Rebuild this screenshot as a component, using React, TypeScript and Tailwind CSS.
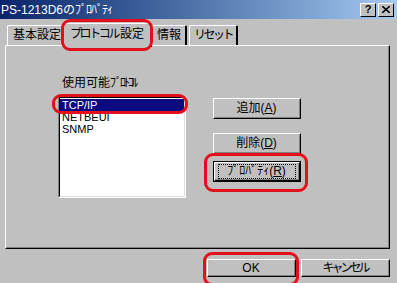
import React from "react"

const font = { fontFamily: '"Liberation Sans", "Noto Sans CJK JP", sans-serif' }

function Ring({ className }: { className: string }) {
    return <div className={`absolute border-[3px] border-[#e3101c] rounded-[9px] pointer-events-none ${className}`} />
}

function Btn({ label, under, def }: { label: React.ReactNode; under: string; def?: boolean }) {
    return (
        <div className={`w-[88px] h-[21px] bg-[#c0c0c0] ${def ? "border border-black" : ""}`}>
            <div className="w-full h-full border-t border-l border-t-white border-l-white border-r border-b border-r-black border-b-black">
                <div className="w-full h-full border-r border-b border-r-[#808080] border-b-[#808080] flex items-center justify-center">
                    <div className={`px-[2px] text-[12px] leading-[13px] text-black ${def ? "outline outline-1 outline-dotted outline-black w-[76px] text-center" : ""}`}>
                        {label}(<span className="underline">{under}</span>)
                    </div>
                </div>
            </div>
        </div>
    )
}

export default function App() {
    return (
        <div className="w-[397px] h-[283px] bg-[#c0c0c0] overflow-hidden relative" style={font}>
            {/* Title bar */}
            <div className="h-[19px] flex items-center justify-between bg-gradient-to-r from-[#0a246a] to-[#a6caf0] pl-[1px] pr-[3px]">
                <span className="text-white text-[12px] leading-[14px]">PS-1213D6の<span className="tracking-[-1px]">ﾌﾟﾛﾊﾟﾃｨ</span></span>
                <div className="flex gap-[2px]">
                    <div className="w-[16px] h-[14px] bg-[#c0c0c0] border-t border-l border-white border-r border-b border-r-black border-b-black flex items-center justify-center text-[11px] font-bold leading-none">?</div>
                    <div className="w-[16px] h-[14px] bg-[#c0c0c0] border-t border-l border-white border-r border-b border-r-black border-b-black flex items-center justify-center">
                        <svg width="8" height="7" viewBox="0 0 8 7">
                            <path d="M0 0 L8 7 M8 0 L0 7" stroke="black" strokeWidth="1.6" />
                        </svg>
                    </div>
                </div>
            </div>

            <div className="pl-[5px] pr-[7px] pt-[2px]">
                {/* Tabs */}
                <div className="flex items-end h-[24px] relative z-10">
                    <div className="ml-[2px] h-[20px] pl-[5px] pr-[3px] border-t border-l border-white rounded-t-[2px] text-[12px] leading-[18px] text-black">基本設定</div>
                    <div className="relative -ml-[1px] h-[24px] mb-[-2px] px-[6px] bg-[#c0c0c0] border-t border-l border-white border-r-2 border-r-black rounded-t-[2px] text-[12px] leading-[20px] text-black whitespace-nowrap">
                        <span className="tracking-[-2.4px]">プロトコル</span><span className="ml-[2px]">設定</span>
                        <Ring className="-left-[3px] -right-[3px] -top-[5px] -bottom-[4px]" />
                    </div>
                    <div className="h-[20px] px-[4px] border-t border-l border-white border-r-2 border-r-black rounded-t-[2px] text-[12px] leading-[18px] text-black">情報</div>
                    <div className="ml-[2px] h-[20px] px-[4px] border-t border-l border-white border-r-2 border-r-black rounded-t-[2px] text-[12px] leading-[18px] text-black whitespace-nowrap tracking-[-2.5px]">リセット</div>
                </div>

                {/* Panel */}
                <div className="h-[204px] border-t border-l border-white border-r border-b border-r-black border-b-black">
                    <div className="h-full border-r border-b border-r-[#808080] border-b-[#808080] flex pl-[52px] pt-[30px]">
                        <div className="flex flex-col">
                            <div className="pl-[4px] text-[12px] leading-[14px] text-black h-[20px] whitespace-nowrap">使用可能<span className="tracking-[-2px]">ﾌﾟﾛﾄｺﾙ</span></div>
                            <div className="w-[128px] h-[102px] border-t border-l border-[#808080] border-r border-b border-r-white border-b-white">
                                <div className="w-full h-full bg-white border-t border-l border-black border-r border-b border-r-[#dfdfdf] border-b-[#dfdfdf] pt-[1px] text-[11px] leading-[12px]">
                                    <div className="relative h-[12px] bg-[#0a0a80] text-white pl-[2px]">
                                        TCP/IP
                                        <Ring className="-left-[8px] -right-[4px] -top-[5px] -bottom-[3px]" />
                                    </div>
                                    <div className="h-[12px] text-black pl-[2px]">NETBEUI</div>
                                    <div className="h-[12px] text-black pl-[2px]">SNMP</div>
                                </div>
                            </div>
                        </div>
                        <div className="ml-[27px] pt-[22px] flex flex-col">
                            <Btn label="追加" under="A" />
                            <div className="mt-[14px]"><Btn label="削除" under="D" /></div>
                            <div className="mt-[7px] relative">
                                <Btn label="ﾌﾟﾛﾊﾟﾃｨ" under="R" def />
                                <Ring className="-left-[9px] -right-[7px] -top-[8px] -bottom-[10px]" />
                            </div>
                        </div>
                    </div>
                </div>

                {/* Bottom buttons */}
                <div className="flex justify-end gap-[5px] mt-[10px]">
                    <div className="relative w-[89px] h-[18px] bg-[#c0c0c0] border-t border-l border-white border-r border-b border-r-black border-b-black">
                        <div className="w-full h-full border-r border-b border-r-[#808080] border-b-[#808080] flex items-center justify-center text-[12px] leading-none text-black">OK</div>
                        <Ring className="-left-[5px] -right-[4px] -top-[8px] -bottom-[10px]" />
                    </div>
                    <div className="w-[89px] h-[18px] bg-[#c0c0c0] border-t border-l border-white border-r border-b border-r-black border-b-black">
                        <div className="w-full h-full border-r border-b border-r-[#808080] border-b-[#808080] flex items-center justify-center text-[12px] leading-none text-black whitespace-nowrap tracking-[-3px]">キャンセル</div>
                    </div>
                </div>
            </div>
        </div>
    )
}
